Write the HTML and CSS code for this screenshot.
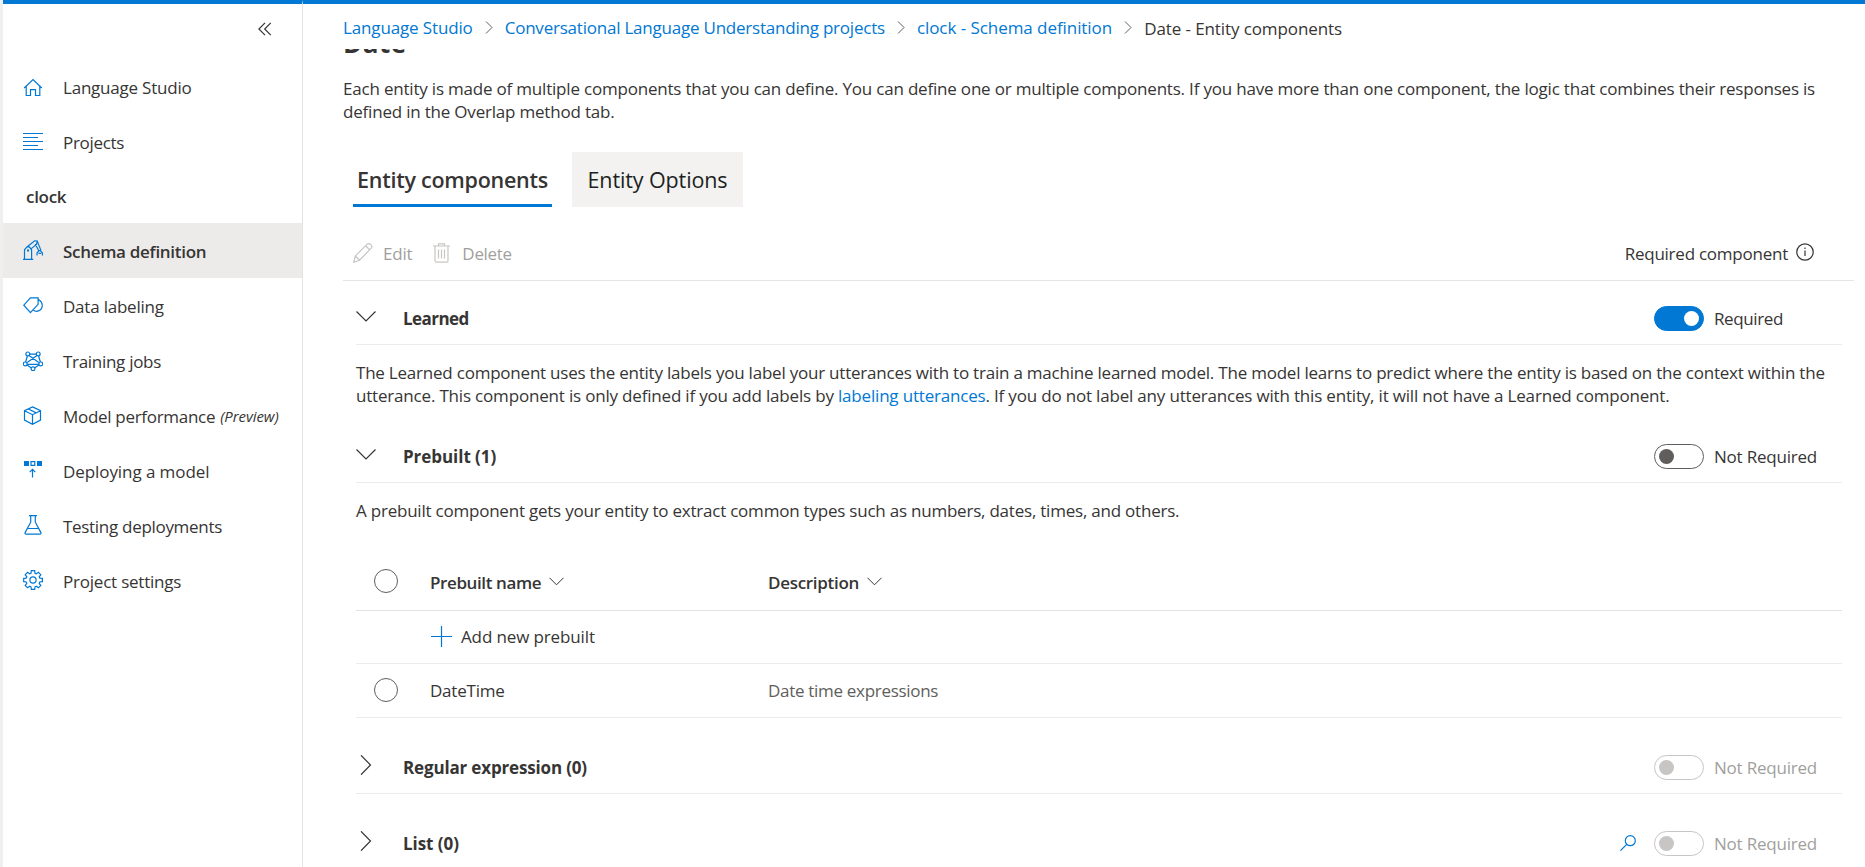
FILE: index.html
```html
<!DOCTYPE html>
<html lang="en">
<head>
<meta charset="utf-8">
<title>Language Studio - Entity components</title>
<link rel="stylesheet" href="styles.css">
</head>
<body>
<div class="app">
  <aside class="sidebar">
    <div class="collapse">
      <svg width="14" height="14" viewBox="0 0 14 14"><path d="M7 .8.9 7 7 13.2M12.8.8 6.7 7l6.1 6.2"/></svg>
    </div>
    <nav class="nav">
      <a class="item"><svg class="ico" viewBox="0 -2 20 20"><path d="M1.200 10 10 1.600l8.800 8.400M3.200 8.400v9.100h4.300v-5.800h5v5.800h4.300V8.400"/></svg><span>Language Studio</span></a>
      <a class="item"><svg class="ico" viewBox="0 -1 20 20"><path d="M0 1.500h20M0 5.500h15M0 9.500h20M0 13.500h15M0 17.500h20"/></svg><span class="tight">Projects</span></a>
      <div class="project tight">clock</div>
      <a class="item active"><svg class="ico" viewBox="0 0 20 20"><path d="M0 19.4h10.200M1.500 19V9.800L4 6.800h2.200l2.400 3V19M4.600 10h.9v.9h-.9zM4.200 6.700l7.400-5.900 2.600.2-.6 3.400-5.400 4.200M12.200 4l3.600 6.700M14.400 1.400l3.500 9M14 15.400v-2.400l1.900-2.300h1.500l2 2.300v2.400M15.500 13.400h2.600"/></svg><span class="tight">Schema definition</span></a>
      <a class="item"><svg class="ico" viewBox="0 0 20 20"><path d="M7.400 2.800h7.700v6.500L7.400 17.600.8 10.200zM15.500 4.600c5 2.600 5 9.300 0 11.300-1.800.7-3.800.4-5.100-.8"/></svg><span>Data labeling</span></a>
      <a class="item low"><svg class="ico" viewBox="0 0 20 20"><path d="M5.200 3.200h9.600M4.400 5 2.600 11M6 4.600l9.800 7M14 4.600l-9.800 7M15.600 5l1.800 6M4.200 13.400h11.600M4 14l4.500 3M16 14l-4.500 3"/><g class="node"><circle cx="4.800" cy="2.900" r="1.900"/><circle cx="15.200" cy="2.900" r="1.900"/><circle cx="2.200" cy="12.900" r="1.900"/><circle cx="17.800" cy="12.900" r="1.900"/><circle cx="10" cy="17.800" r="1.900"/></g></svg><span class="tight">Training jobs</span></a>
      <a class="item low"><svg class="ico" viewBox="0 0 20 20"><path d="M9.500.9 17.500 4.600v9.500l-8 4.300-8-4.300V4.600zM1.500 4.800l8 3.900 8-3.900M9.500 8.700v9.500M5.300 3l8 3.900"/></svg><span class="tight">Model performance</span><em>(Preview)</em></a>
      <a class="item"><svg class="ico" viewBox="0 0 20 20"><path class="solid" d="M1 1h5v5H1zM14 1h5v5h-5z"/><path d="M8 1.600h3.800v3.800H8zM9.500 17.500V9.500M6.700 12.100l2.800-2.800 2.800 2.800"/></svg><span class="wide">Deploying a model</span></a>
      <a class="item"><svg class="ico" viewBox="0 0 20 20"><path d="M6 .7h8M7.700.7v6.500L2.100 17.600c-.3.900 0 1.600 1 1.600h13.800c1 0 1.300-.7 1-1.600L12.300 7.200V.7M4.600 13.500h10.800"/></svg><span class="tight">Testing deployments</span></a>
      <a class="item"><svg class="ico" viewBox="0 0 20 20"><path d="M8.300.7h3.400l.3 2.600 1.300.6 2.100-1.600 2.400 2.400-1.600 2.100.6 1.300 2.600.3v3.300l-2.600.3-.6 1.300 1.600 2.100-2.400 2.400-2.100-1.600-1.300.6-.3 2.600H8.300L8 16.800l-1.300-.6-2.100 1.600-2.400-2.400 1.600-2.100-.6-1.300-2.500-.3V8.400l2.500-.3.600-1.300-1.600-2.100 2.400-2.400 2.100 1.600L8 3.300z"/><circle cx="10" cy="10" r="3.100"/></svg><span>Project settings</span></a>
    </nav>
  </aside>

  <main class="main">
    <div class="crumbs">
      <a class="c-studio">Language Studio</a>
      <svg class="sep" viewBox="0 0 8 13"><path d="M1 .5l6 6-6 6"/></svg>
      <a class="c-projects">Conversational Language Understanding projects</a>
      <svg class="sep" viewBox="0 0 8 13"><path d="M1 .5l6 6-6 6"/></svg>
      <a class="c-schema">clock - Schema definition</a>
      <svg class="sep" viewBox="0 0 8 13"><path d="M1 .5l6 6-6 6"/></svg>
      <span class="here">Date - Entity components</span>
    </div>
    <div class="scroll">
      <h1 class="title">Date</h1>
      <p class="intro">Each entity is made of multiple components that you can define. You can define one or multiple components. If you have more than one component, the logic that combines their responses is<br>defined in the Overlap method tab.</p>
      <div class="tabs">
        <div class="tab selected">Entity components</div>
        <div class="tab hovered">Entity Options</div>
      </div>
      <div class="toolbar">
        <svg class="pencil" viewBox="0 0 20 20"><path d="M.8 19.200 2.300 13 14 1.400c1-1 2.600-1 3.800.2s1.200 2.800.2 3.800L6.600 17.200zM2.300 13l4.300 4.200M12.600 2.800l4.300 4.200"/></svg>
        <span class="cmd">Edit</span>
        <svg class="trash" viewBox="0 0 17 20"><path d="M0 3h17M5.500 3V.8h6V3M2 3v14.700c0 1 .5 1.500 1.400 1.500h10.200c.9 0 1.400-.5 1.400-1.500V3M5.500 6.500v9M8.500 6.500v9M11.500 6.500v9"/></svg>
        <span class="cmd tight">Delete</span>
        <span class="required">Required component</span>
        <svg class="info" viewBox="0 0 18 18"><circle cx="9" cy="9" r="8.200"/><path d="M9 7.600V13M9 4.600v1.500"/></svg>
      </div>

      <div class="sections">
        <section>
          <header class="head first">
            <svg class="chev" viewBox="0 0 20 20"><path d="M.5 5.500 10 15l9.500-9.500"/></svg>
            <h2 class="squeeze">Learned</h2>
            <div class="toggle-box"><i class="toggle on"></i><span class="tighter">Required</span></div>
          </header>
          <p class="text">The Learned component uses the entity labels you label your utterances with to train a machine learned model. The model learns to predict where the entity is based on the context within the<br><span class="line2">utterance. This component is only defined if you add labels by <a>labeling utterances</a>. If you do not label any utterances with this entity, it will not have a Learned component.</span></p>
        </section>
        <section>
          <header class="head">
            <svg class="chev" viewBox="0 0 20 20"><path d="M.5 5.500 10 15l9.500-9.500"/></svg>
            <h2>Prebuilt (1)</h2>
            <div class="toggle-box"><i class="toggle"></i><span>Not Required</span></div>
          </header>
          <p class="text">A prebuilt component gets your entity to extract common types such as numbers, dates, times, and others.</p>
          <div class="table">
            <div class="row labels">
              <i class="radio"></i>
              <span class="name tighter">Prebuilt name<svg class="sort" viewBox="0 0 15 9"><path d="M.5.800l7 7 7-7"/></svg></span>
              <span class="tight">Description<svg class="sort" viewBox="0 0 15 9"><path d="M.5.800l7 7 7-7"/></svg></span>
            </div>
            <div class="row add">
              <svg class="plus" viewBox="0 0 21 21"><path d="M10.500 0v21M0 10.500h21"/></svg>
              <span class="add-label">Add new prebuilt</span>
            </div>
            <div class="row">
              <i class="radio"></i>
              <span class="name">DateTime</span>
              <span class="muted tight">Date time expressions</span>
            </div>
          </div>
        </section>
        <section>
          <header class="head">
            <svg class="chev" viewBox="0 0 20 20"><path d="M5 .3 14.500 10 5 19.700"/></svg>
            <h2 class="regular">Regular expression (0)</h2>
            <div class="toggle-box off"><i class="toggle"></i><span>Not Required</span></div>
          </header>
        </section>
        <section>
          <header class="head">
            <svg class="chev" viewBox="0 0 20 20"><path d="M5 .3 14.500 10 5 19.700"/></svg>
            <h2>List (0)</h2>
            <svg class="search" viewBox="0 0 16 16"><circle cx="10.300" cy="5.700" r="5"/><path d="M6.700 9.300.4 15.600"/></svg>
            <div class="toggle-box off"><i class="toggle"></i><span>Not Required</span></div>
          </header>
        </section>
      </div>
    </div>
  </main>
</div>
</body>
</html>
```
FILE: styles.css
```css
* { box-sizing: border-box; }

body {
  margin: 0;
  height: 867px;
  overflow: hidden;
  background: #fff;
  color: #363534;
  font: 17px/23px "Open Sans", "Noto Sans", sans-serif;
  letter-spacing: -0.215px;
}

h1, h2, p { margin: 0; }
i, em { display: block; }
svg { display: block; flex: none; fill: none; stroke: currentColor; stroke-width: 1.2; }
a { color: #0078d4; }

.tight { letter-spacing: -0.3px; }
.tighter { letter-spacing: -0.39px; }

.app {
  display: flex;
  height: 867px;
  border-left: 3px solid #efefef;
}

/* Sidebar */
.sidebar {
  flex: none;
  width: 300px;
  border-top: 4px solid #0078d4;
  border-right: 1px solid #e3e3e3;
}
.collapse {
  display: flex;
  justify-content: flex-end;
  height: 55px;
  padding: 18px 30px 0 0;
}
.item {
  display: flex;
  align-items: center;
  height: 55px;
  padding: 0 0 0 20px;
  color: #363534;
}
.item span { margin-left: 20px; padding-top: 1px; }
.item .wide { letter-spacing: -0.08px; }
.item em { margin: 1px 0 0 5px; font-size: 15px; letter-spacing: -0.1px; }
.ico { width: 20px; height: 20px; margin-top: -1px; color: #0078d4; }
.low .ico { margin-top: 0; }
.active .ico { margin-top: -2px; }
.ico .solid { fill: currentColor; stroke: none; }
.ico .node { fill: #fff; }
.project {
  height: 54px;
  padding: 16px 0 0 23px;
  font-weight: 600;
}
.active { background: #edebe9; font-weight: 600; }

/* Breadcrumb */
.main {
  flex: 1;
  min-width: 0;
  border-top: 4px solid #0078d4;
  padding: 0 11px 0 40px;
}
.crumbs {
  display: flex;
  align-items: center;
  height: 45px;
  padding-top: 1px;
  white-space: nowrap;
}
.sep { width: 8px; height: 13px; margin: 0 12px; color: #605e5c; stroke-width: 1; }
.c-studio { letter-spacing: -0.14px; }
.c-projects { letter-spacing: -0.22px; }
.c-schema { letter-spacing: -0.06px; }
.here { padding-top: 2px; letter-spacing: -0.1px; }

.scroll { height: 818px; overflow: hidden; }
.title {
  margin-top: -21px;
  height: 49px;
  font-size: 26px;
  line-height: 30px;
  letter-spacing: 0.5px;
}
.intro, .text { white-space: nowrap; }
.intro { letter-spacing: -0.2px; }

/* Tabs and commands */
.tabs {
  display: flex;
  gap: 20px;
  margin: 29px 0 0 10px;
}
.tab {
  height: 55px;
  font-size: 21.5px;
  line-height: 56px;
  text-align: center;
}
.selected {
  width: 199px;
  border-bottom: 3px solid #0078d4;
  font-weight: 600;
  letter-spacing: -0.25px;
}
.hovered { width: 171px; background: #f3f2f1; color: #201f1e; letter-spacing: -0.11px; }
.toolbar {
  display: flex;
  align-items: center;
  height: 55px;
  margin-top: 19px;
  padding: 0 40px 0 10px;
  border-bottom: 1px solid #e6e6e6;
}
.pencil { width: 20px; height: 20px; color: #c8c6c4; }
.trash { width: 17px; height: 20px; margin-left: 21px; color: #c8c6c4; }
.cmd { margin-left: 10px; color: #a19f9d; }
.trash + .cmd { margin-left: 12px; }
.required { margin-left: auto; letter-spacing: -0.24px; }
.info { width: 18px; height: 18px; margin: -2px 0 0 8px; }

/* Component sections */
.sections { margin: 0 12px 0 13px; }
section { margin-bottom: 23px; }
.head {
  display: flex;
  align-items: center;
  height: 53px;
  border-bottom: 1px solid #edebe9;
}
.first { height: 64px; padding-top: 11px; }
.chev { width: 20px; height: 20px; margin-top: -5px; }
.head h2 {
  margin: 0 auto 0 27px;
  font-size: 17px;
  font-weight: 700;
  letter-spacing: -0.05px;
}
.head .squeeze { letter-spacing: -0.55px; }
.head .regular { letter-spacing: -0.16px; }
.toggle-box {
  display: flex;
  align-items: center;
  gap: 10px;
  width: 188px;
}
.toggle {
  width: 50px;
  height: 25px;
  padding: 4px;
  border: 1px solid #605e5c;
  border-radius: 13px;
  color: #605e5c;
}
.toggle::before {
  content: "";
  display: block;
  width: 15px;
  height: 15px;
  border-radius: 50%;
  background: currentColor;
}
.on { background: #0078d4; border-color: #0078d4; color: #fff; }
.on::before { margin-left: auto; }
.off { color: #a19f9d; }
.off .toggle { border-color: #c8c6c4; color: #c8c6c4; }
.search { width: 16px; height: 16px; margin-right: 18px; color: #0078d4; }
.text { margin-top: 16px; letter-spacing: -0.22px; }
.line2 { letter-spacing: -0.185px; }

/* Prebuilt table */
.table { margin-top: 31px; }
.row {
  display: flex;
  align-items: center;
  height: 54px;
  padding-left: 18px;
  border-bottom: 1px solid #edebe9;
}
.radio {
  width: 24px;
  height: 24px;
  margin-top: -1px;
  border: 1.4px solid #605e5c;
  border-radius: 50%;
}
.name { width: 338px; margin-left: 32px; }
.labels { height: 58px; font-weight: 600; border-color: #e3e3e3; }
.labels span { display: flex; align-items: center; padding-top: 2px; }
.sort { width: 15px; height: 9px; margin: -2px 0 0 8px; stroke-width: 1; }
.add { height: 53px; padding: 0 0 2px 75px; }
.add-label { letter-spacing: -0.13px; }
.plus { width: 21px; height: 21px; margin-right: 9px; color: #0078d4; }
.muted { color: #605e5c; }
```
